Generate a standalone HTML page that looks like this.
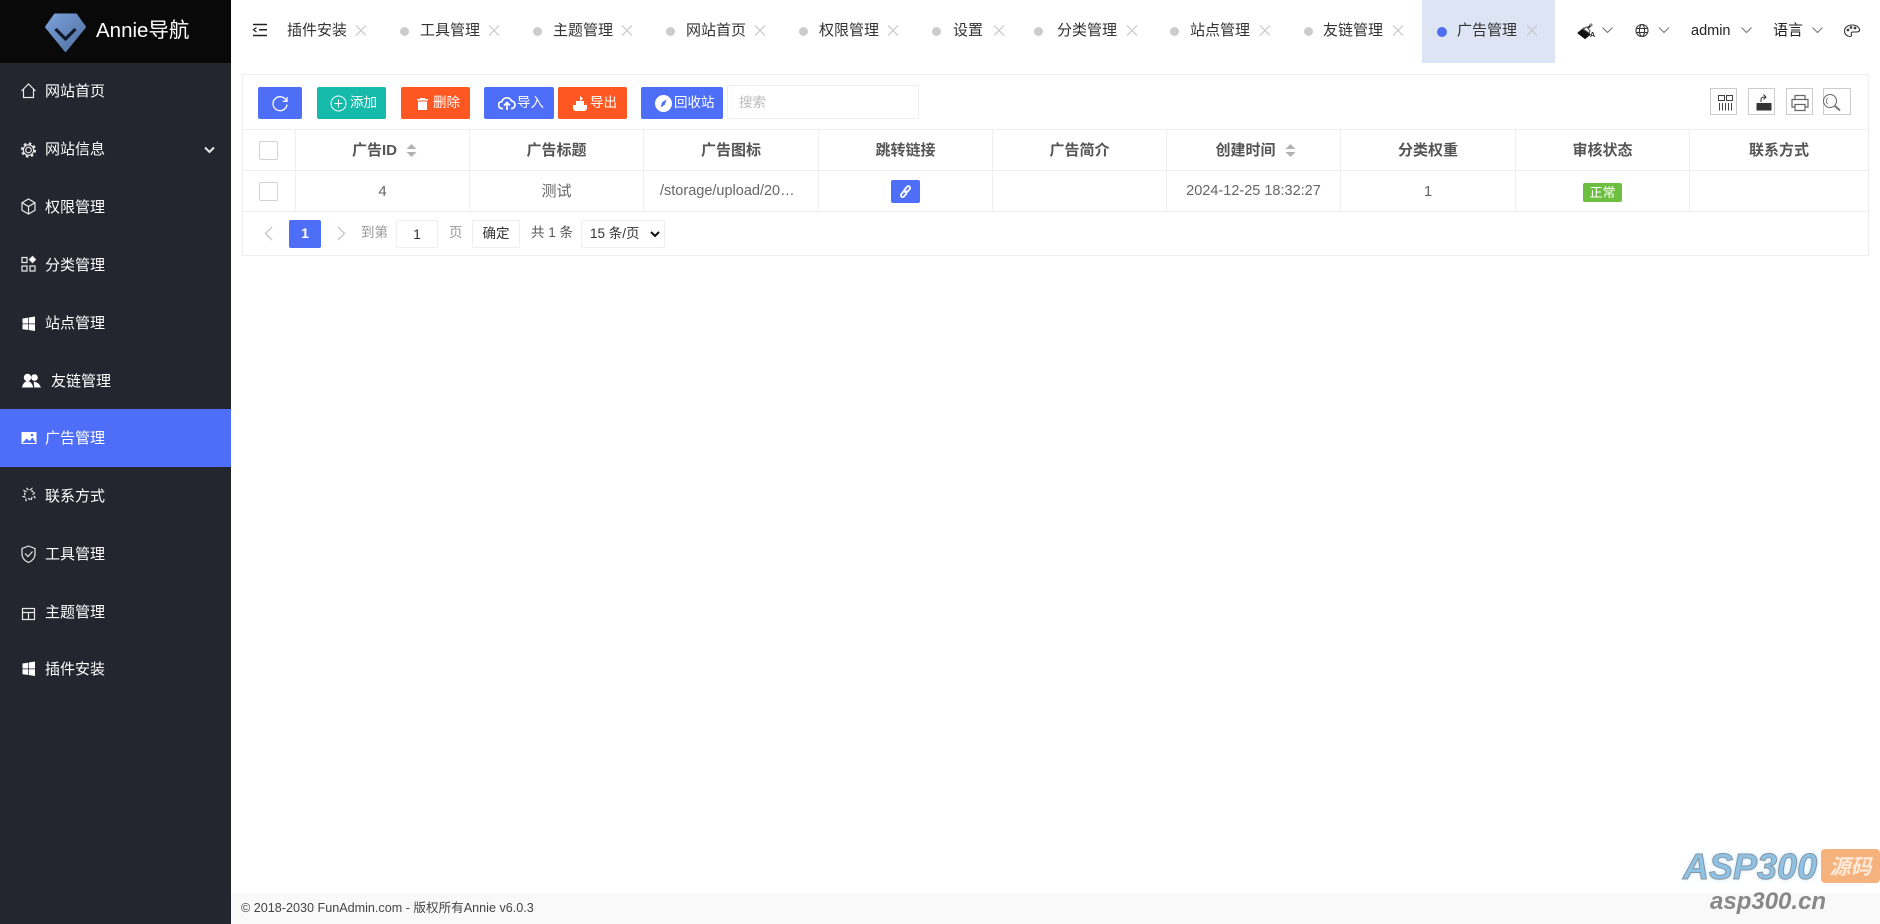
<!DOCTYPE html>
<html lang="zh"><head><meta charset="utf-8"><title>Annie导航</title>
<style>
*{box-sizing:border-box;margin:0;padding:0}
html,body{width:1880px;height:924px;overflow:hidden;background:#fff;font-family:"Liberation Sans","WenQuanYi Zen Hei","Noto Sans CJK SC",sans-serif;font-size:14px;color:#333}
.a{position:absolute;white-space:nowrap}
#side{left:0;top:0;width:231px;height:924px;background:#23262f}
#logo{left:0;top:0;width:231px;height:63px;background:#090909}
.mi{left:45px;color:#fff;font-size:15px;line-height:20px;height:20px}
.ic{position:absolute}
.tt{font-size:15px;color:#333;line-height:20px;top:21px}
.dot{width:9px;height:9px;border-radius:50%;background:#ccc;top:27px}
.btn{top:87px;height:32px;border-radius:2px;color:#fff;font-size:13.500px;line-height:31px}
.th{top:131px;height:40px;line-height:40px;text-align:center;font-size:15px;color:#555;font-weight:bold}
.td{top:171px;height:41px;line-height:41px;text-align:center;font-size:15px;color:#666}
.ln{background:#eee;position:absolute}
.tb{top:88px;width:27px;height:27px;border:1px solid #ccc}
</style></head><body>

<div class="a" id="side"></div>
<div class="a" id="logo"></div>
<svg class="ic" style="left:44px;top:12px" width="44" height="42" viewBox="0 0 44 42">
<defs><linearGradient id="g" x1="0" y1="0" x2="1" y2="1"><stop offset="0" stop-color="#7ba2dc"/><stop offset="1" stop-color="#4f6d9e"/></linearGradient></defs>
<path d="M11 2.500H32L41 15L21.500 39L2 15Z" fill="url(#g)" stroke="url(#g)" stroke-width="2" stroke-linejoin="round"/>
<path d="M11.500 17L21.500 27L31.500 17" fill="none" stroke="#12182a" stroke-width="3.200"/></svg>
<div class="a" style="left:96px;top:18px;color:#fff;font-size:20.500px;line-height:26px">Annie导航</div>

<div class="a" style="left:0;top:409px;width:231px;height:58px;background:#4e6ef9"></div>
<div class="a mi" style="top:82px">网站首页</div>
<div class="a mi" style="top:140px">网站信息</div>
<div class="a mi" style="top:198px">权限管理</div>
<div class="a mi" style="top:256px">分类管理</div>
<div class="a mi" style="top:314px">站点管理</div>
<div class="a mi" style="top:372px;left:51px">友链管理</div>
<div class="a mi" style="top:429px">广告管理</div>
<div class="a mi" style="top:487px">联系方式</div>
<div class="a mi" style="top:545px">工具管理</div>
<div class="a mi" style="top:603px">主题管理</div>
<div class="a mi" style="top:660px">插件安装</div>

<svg class="ic" style="left:0;top:63px" width="231" height="640" viewBox="0 0 231 640" fill="none" stroke="#e8e8e8" stroke-width="1.200">
<path d="M21.500 28L28.500 21L35.500 28M23.500 26V34.500H33.500V26"/>
<circle cx="28.500" cy="87" r="2.800"/><circle cx="28.500" cy="87" r="5.200"/><circle cx="28.500" cy="87" r="6.600" stroke-width="2" stroke-dasharray="2.600 2.600"/>
<path d="M28.500 136L35 139.700V147.300L28.500 151L22 147.300V139.700ZM22 139.700L28.500 143.500L35 139.700M28.500 143.500V151"/>
<path d="M22 194.500h5v5h-5zM22 203h5v5h-5zM30 203h5v5h-5z"/><path d="M32.500 193.500l3 3-3 3-3-3z" fill="#fff"/>
<path d="M22.500 255.500l5.500-.8v5.800h-5.500zM22.500 261.200h5.500v5.700l-5.500-.7zM28.700 254.500l6.300-1v7h-6.300zM28.700 261.200h6.300v6.800l-6.300-1z" fill="#fff" stroke="none"/>
<circle cx="27.500" cy="314.500" r="3.700" fill="#fff" stroke="none"/><circle cx="34.500" cy="314.500" r="3.300" fill="#fff" stroke="none"/>
<path d="M22 324.500q.8-5.500 5.500-6.500q5 1 5.700 6.500zM33.700 318.500q5 .5 7.300 6h-6.800z" fill="#fff" stroke="none"/>
<path d="M21.500 369h15v12h-15z" fill="#fff" stroke="none"/><path d="M22.500 380l4-4.500 3 2.500 3-3.500 3.500 5.500z" fill="#4e6ef9" stroke="none"/><circle cx="32" cy="372" r="1.300" fill="#4e6ef9" stroke="none"/>
<path d="M24 427.500l2 1 1-3 2 2 3-2 0 3 3 1-2 2 2 3-3 0-1 3-2-2-3 2 0-3-3-1 2-2z" stroke-dasharray="3 1.500"/>
<path d="M28.500 483L35 485.500V491C35 495 32 498 28.500 499.500C25 498 22 495 22 491V485.500Z"/><path d="M25 490.500L28 493.500L32.500 488.500"/>
<path d="M22.500 545.500h12v11h-12zM22.500 549.500h12M28.500 549.500v7"/>
<path d="M22.500 600.500l5.500-.8v5.800h-5.500zM22.500 606.200h5.500v5.700l-5.500-.7zM28.700 599.500l6.300-1v7h-6.300zM28.700 606.200h6.300v6.800l-6.300-1z" fill="#fff" stroke="none"/>
<path d="M205 84.500L209.500 89L214 84.500" stroke-width="2"/>
</svg>

<!-- top tabs -->
<svg class="ic" style="left:252px;top:23px" width="16" height="14" viewBox="0 0 16 14" fill="none" stroke="#222" stroke-width="1.500"><path d="M1 1.500H15M7 6.800H15M1 12.500H15"/><path d="M4.500 4.500L1.500 6.800L4.500 9" stroke-width="1.200"/></svg>
<div class="a tt" style="left:287px">插件安装</div>
<div class="a dot" style="left:400px"></div><div class="a tt" style="left:420px">工具管理</div>
<div class="a dot" style="left:533px"></div><div class="a tt" style="left:553px">主题管理</div>
<div class="a dot" style="left:666px"></div><div class="a tt" style="left:686px">网站首页</div>
<div class="a dot" style="left:799px"></div><div class="a tt" style="left:819px">权限管理</div>
<div class="a dot" style="left:932px"></div><div class="a tt" style="left:953px">设置</div>
<div class="a dot" style="left:1034px"></div><div class="a tt" style="left:1057px">分类管理</div>
<div class="a dot" style="left:1170px"></div><div class="a tt" style="left:1190px">站点管理</div>
<div class="a dot" style="left:1304px"></div><div class="a tt" style="left:1323px">友链管理</div>
<div class="a" style="left:1422px;top:0;width:133px;height:63px;background:#dde4f3"></div>
<div class="a dot" style="left:1437px;background:#4e6ef0;width:10px;height:10px"></div><div class="a tt" style="left:1457px">广告管理</div>

<svg class="ic" style="left:0;top:0" width="1880" height="63" viewBox="0 0 1880 63" fill="none" stroke="#c4c4c4" stroke-width="1.100">
<g transform="translate(0 -1)"><path d="M356 26.500L366 36.500M366 26.500L356 36.500M489 26.500L499 36.500M499 26.500L489 36.500M622 26.500L632 36.500M632 26.500L622 36.500M755 26.500L765 36.500M765 26.500L755 36.500M888 26.500L898 36.500M898 26.500L888 36.500M994 26.500L1004 36.500M1004 26.500L994 36.500M1127 26.500L1137 36.500M1137 26.500L1127 36.500M1260 26.500L1270 36.500M1270 26.500L1260 36.500M1393 26.500L1403 36.500M1403 26.500L1393 36.500M1527 26.500L1537 36.500M1537 26.500L1527 36.500"/></g>
<g stroke="#777"><path d="M1602.500 27.500L1607.500 32.500L1612.500 27.500M1659 27.500L1664 32.500L1669 27.500M1741.500 27.500L1746.500 32.500L1751.500 27.500M1812.500 27.500L1817.500 32.500L1822.500 27.500"/></g>
<path d="M1587 29L1591 25" stroke="#333" stroke-width="2"/><path d="M1590 26L1592 24" stroke="#888" stroke-width="3"/>
<path d="M1578 33L1584 28L1590 34.500L1585 38.500Z" fill="#111" stroke="#111"/><path d="M1583 29L1587 27L1590 31L1589 33Z" fill="#fff" stroke="#555"/>
<g stroke="#333"><circle cx="1642" cy="30.500" r="6"/><ellipse cx="1642" cy="30.500" rx="2.600" ry="6"/><path d="M1636 28.500H1648M1636 32.500H1648"/>
<path d="M1852 25C1848 25 1844.500 27.500 1844.500 31C1844.500 34.500 1847.500 36.500 1850 36.500C1851.800 36.500 1851.800 35 1851.200 34C1850.800 32.800 1851.800 32 1853 32H1856.500C1858.800 32 1860 31 1859.500 29.300C1858.500 26.500 1855.500 25 1852 25Z"/>
<circle cx="1848" cy="30" r=".8"/><circle cx="1851" cy="27.500" r=".8"/><circle cx="1855" cy="28" r=".8"/></g>
</svg>
<div class="a" style="left:1590px;top:32px;font-size:7px;line-height:8px;font-weight:bold;color:#222">A</div>
<div class="a" style="left:1691px;top:21px;color:#222;font-size:14.500px;line-height:20px">admin</div>
<div class="a" style="left:1773px;top:21px;color:#222;font-size:15px;line-height:20px">语言</div>

<!-- panel -->
<div class="a" style="left:242px;top:74px;width:1627px;height:182px;border:1px solid #eee"></div>
<div class="a btn" style="left:258px;width:44px;background:#4e6ef8"></div>
<svg class="ic" style="left:272px;top:95px" width="17" height="17" viewBox="0 0 17 17" fill="none" stroke="#fff" stroke-width="1.300"><path d="M14.500 6A7 7 0 1 0 15 9.500"/><path d="M15 2V6.300H10.800"/></svg>
<div class="a btn" style="left:317px;width:69px;background:#16baaa;padding-left:33px">添加</div>
<svg class="ic" style="left:330px;top:95px" width="17" height="17" viewBox="0 0 17 17" fill="none" stroke="#fff"><circle cx="8.500" cy="8.500" r="7.500"/><path d="M4.500 8.500H12.500M8.500 4.500V12.500"/></svg>
<div class="a btn" style="left:401px;width:69px;background:#ff5722;padding-left:32px">删除</div>
<svg class="ic" style="left:416px;top:97px" width="13" height="14" viewBox="0 0 13 14"><path d="M1 2h11v1.500H1zM2 4.500h9V13H2z" fill="#fff"/><path d="M4 1h5v1H4z" fill="#fff"/></svg>
<div class="a btn" style="left:484px;width:70px;background:#4e6ef8;padding-left:33px">导入</div>
<svg class="ic" style="left:498px;top:96px" width="18" height="14" viewBox="0 0 18 14"><path d="M5 12.500H4A3.500 3.500 0 0 1 4 5.500A5 5 0 0 1 13.500 5A3.800 3.800 0 0 1 14 12.500H13" fill="none" stroke="#fff" stroke-width="1.700"/><path d="M9 7V14M6 9.500L9 6.500L12 9.500" fill="none" stroke="#fff" stroke-width="1.700"/></svg>
<div class="a btn" style="left:558px;width:69px;background:#ff5722;padding-left:32px">导出</div>
<svg class="ic" style="left:573px;top:96px" width="14" height="15" viewBox="0 0 14 15"><path d="M0 9h14v4l-2 2H2l-2-2zM3 5h8v4H3z" fill="#fff"/><path d="M7 0l3 2.500-3 2.500z" fill="#fff"/></svg>
<div class="a btn" style="left:641px;width:82px;background:#4e6ef8;padding-left:33px">回收站</div>
<svg class="ic" style="left:655px;top:95px" width="17" height="17" viewBox="0 0 17 17"><circle cx="8.500" cy="8.500" r="8.500" fill="#fff"/><path d="M11.500 4.500L9.800 9.800L5.500 12.500L7.200 7.200Z" fill="#4e6ef8"/></svg>
<div class="a" style="left:727px;top:85px;width:192px;height:34px;border:1px solid #eee;border-radius:2px;color:#bbb;font-size:13.500px;line-height:34px;padding-left:11px">搜索</div>

<div class="a tb" style="left:1710px"></div><div class="a tb" style="left:1748px"></div><div class="a tb" style="left:1786px"></div><div class="a tb" style="left:1823px;width:28px"></div>
<svg class="ic" style="left:1700px;top:85px" width="160" height="32" viewBox="0 0 160 32" fill="none" stroke="#444" stroke-width="1">
<path d="M18.500 10.500h6v5h-6zM26.500 10.500h6v5h-6zM19.500 18v7.500M22.500 18v7.500M25.500 18v7.500M28.500 18v7.500M31.500 18v7.500"/>
<path d="M57 25V18.500h14V25Z" fill="#333" stroke="#333"/><path d="M61 17V14.500C61 12.500 62.500 12 65 12M63.500 9.500L66 12L63.500 14.500" stroke="#333"/>
<path d="M95 14V10.500H105V14M95 22H92V14.500H108V22H105M95 19.500H105V25.500H95Z" stroke="#666" stroke-width="1.200"/>
<circle cx="130" cy="16" r="6.500" stroke="#666"/><path d="M135 21L140 25.500" stroke="#777" stroke-width="2"/><path d="M128 13A3.500 3.500 0 0 0 128 19" stroke="#888"/>
</svg>

<!-- table lines -->
<div class="ln" style="left:243px;top:129px;width:1625px;height:1px"></div>
<div class="ln" style="left:243px;top:170px;width:1625px;height:1px"></div>
<div class="ln" style="left:243px;top:211px;width:1625px;height:1px"></div>
<div class="ln" style="left:295px;top:129px;width:1px;height:82px"></div>
<div class="ln" style="left:469px;top:129px;width:1px;height:82px"></div>
<div class="ln" style="left:643px;top:129px;width:1px;height:82px"></div>
<div class="ln" style="left:818px;top:129px;width:1px;height:82px"></div>
<div class="ln" style="left:992px;top:129px;width:1px;height:82px"></div>
<div class="ln" style="left:1166px;top:129px;width:1px;height:82px"></div>
<div class="ln" style="left:1340px;top:129px;width:1px;height:82px"></div>
<div class="ln" style="left:1515px;top:129px;width:1px;height:82px"></div>
<div class="ln" style="left:1689px;top:129px;width:1px;height:82px"></div>

<div class="a" style="left:259px;top:141px;width:19px;height:19px;border:1px solid #d2d2d2;border-radius:2px"></div>
<div class="a" style="left:259px;top:182px;width:19px;height:19px;border:1px solid #d2d2d2;border-radius:2px"></div>

<div class="a th" style="left:296px;width:173px;padding-right:16px">广告ID</div>
<svg class="ic" style="left:406px;top:143px" width="11" height="15" viewBox="0 0 11 15" fill="#b2b2b2"><path d="M5.500 1L10.500 6H.5zM.5 9H10.500L5.500 14z"/></svg>
<div class="a th" style="left:470px;width:173px">广告标题</div>
<div class="a th" style="left:644px;width:174px">广告图标</div>
<div class="a th" style="left:819px;width:173px">跳转链接</div>
<div class="a th" style="left:993px;width:173px">广告简介</div>
<div class="a th" style="left:1167px;width:173px;padding-right:16px">创建时间</div>
<svg class="ic" style="left:1285px;top:143px" width="11" height="15" viewBox="0 0 11 15" fill="#b2b2b2"><path d="M5.500 1L10.500 6H.5zM.5 9H10.500L5.500 14z"/></svg>
<div class="a th" style="left:1341px;width:174px">分类权重</div>
<div class="a th" style="left:1516px;width:173px">审核状态</div>
<div class="a th" style="left:1690px;width:178px">联系方式</div>

<div class="a td" style="left:296px;width:173px">4</div>
<div class="a td" style="left:470px;width:173px">测试</div>
<div class="a td" style="left:660px;width:148px;text-align:left;font-size:14.500px">/storage/upload/20…</div>
<div class="a" style="left:891px;top:180px;width:29px;height:23px;background:#4e6ef8;border-radius:2px"></div>
<svg class="ic" style="left:898px;top:184px" width="15" height="15" viewBox="0 0 15 15" fill="none" stroke="#fff" stroke-width="1.800"><rect x="1" y="5.800" width="7" height="3.600" rx="1.800" transform="rotate(-50 4.500 7.600) translate(-1 2.500)"/><rect x="7" y="5.800" width="7" height="3.600" rx="1.800" transform="rotate(-50 10.500 7.600) translate(1 -2.500)"/></svg>
<div class="a td" style="left:1167px;width:173px;font-size:14.500px">2024-12-25 18:32:27</div>
<div class="a td" style="left:1341px;width:174px">1</div>
<div class="a" style="left:1583px;top:183px;width:39px;height:19px;background:#6cbf3f;border-radius:2px;color:#fff;font-size:13px;line-height:19px;text-align:center">正常</div>

<!-- pager -->
<svg class="ic" style="left:262px;top:225px" width="90" height="18" viewBox="0 0 90 18" fill="none" stroke="#c8c8c8" stroke-width="1.400"><path d="M10 2L3.500 8.500L10 15M76 2L82.500 8.500L76 15"/></svg>
<div class="a" style="left:289px;top:220px;width:32px;height:28px;background:#4e6ef8;border-radius:2px;color:#fff;text-align:center;line-height:26px;font-size:14px;font-weight:bold">1</div>
<div class="a" style="left:361px;top:223px;color:#999;font-size:13.500px;line-height:20px">到第</div>
<div class="a" style="left:396px;top:220px;width:42px;height:28px;border:1px solid #eee;border-radius:2px;text-align:center;line-height:26px;color:#333">1</div>
<div class="a" style="left:449px;top:223px;color:#999;font-size:13.500px;line-height:20px">页</div>
<div class="a" style="left:472px;top:220px;width:48px;height:28px;border:1px solid #eee;border-radius:2px;text-align:center;line-height:26px;color:#333;font-size:13.500px">确定</div>
<div class="a" style="left:531px;top:223px;color:#555;font-size:13.500px;line-height:20px">共 1 条</div>
<div class="a" style="left:581px;top:220px;width:84px;height:28px;border:1px solid #eee;border-radius:2px;line-height:26px;padding-left:8px;color:#333;font-size:13.500px">15 条/页</div>
<svg class="ic" style="left:650px;top:231px" width="10" height="7" viewBox="0 0 10 7" fill="none" stroke="#111" stroke-width="2"><path d="M1 1L5 5L9 1"/></svg>

<!-- footer -->
<div class="a" style="left:231px;top:893px;width:1649px;height:31px;background:#f9f9f9"></div>
<div class="a" style="left:241px;top:899px;font-size:12.600px;color:#444;line-height:18px">© 2018-2030 FunAdmin.com - 版权所有Annie v6.0.3</div>

<!-- watermark -->
<div class="a" style="left:1683px;top:849px;font:italic bold 36px/36px 'Liberation Sans',sans-serif;color:#8ec3e8;-webkit-text-stroke:1px #8c939c;text-shadow:0 0 5px #b8e6ff">ASP300</div>
<div class="a" style="left:1821px;top:849px;width:59px;height:34px;background:#f6b27c;border-radius:4px;color:#fdeadb;font:italic bold 21px/34px 'Noto Sans CJK SC',sans-serif;text-align:center">源码</div>
<div class="a" style="left:1710px;top:889px;font:italic bold 24px/26px 'Liberation Sans',sans-serif;color:#888">asp300.cn</div>
</body></html>
